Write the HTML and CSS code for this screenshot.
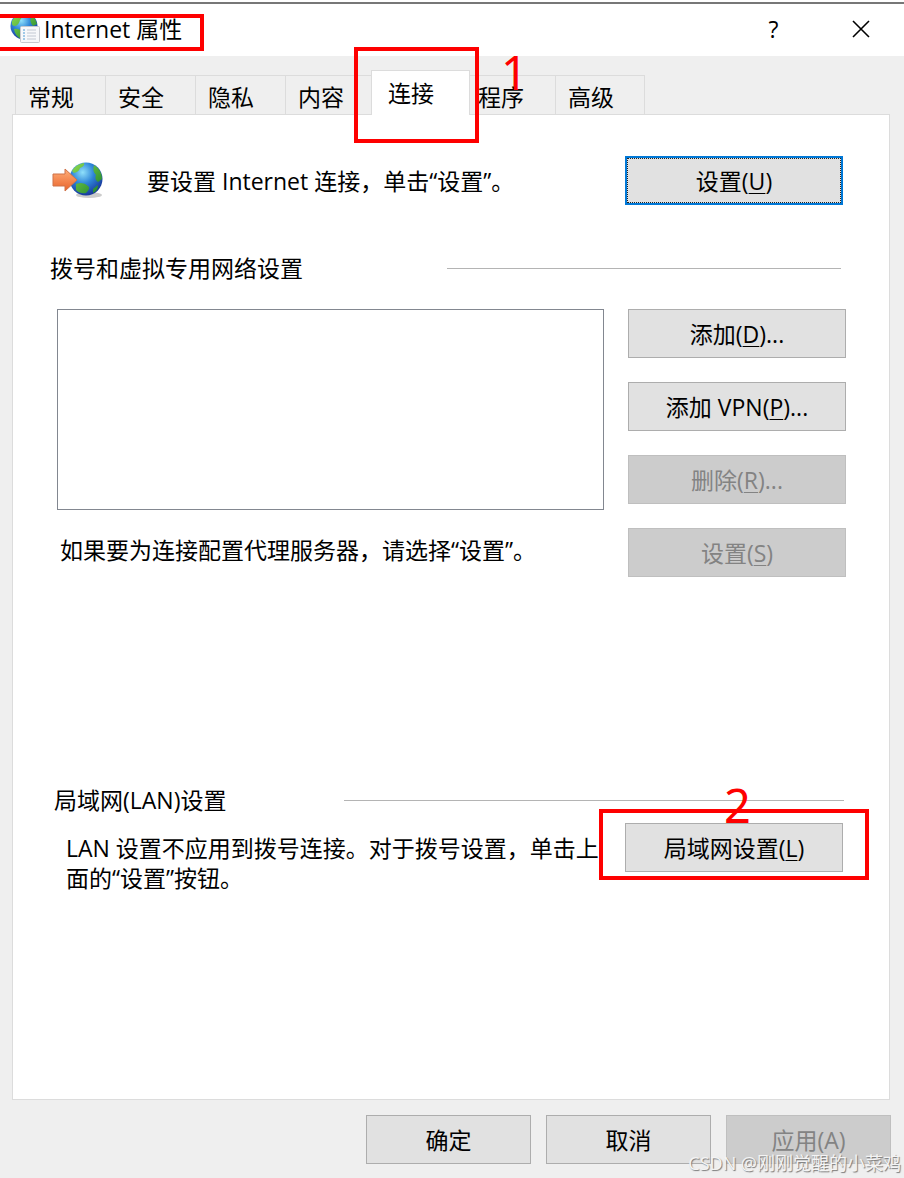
FILE: index.html
```html
<!DOCTYPE html>
<html lang="zh-CN">
<head>
    <meta charset="UTF-8">
    <meta name="viewport" content="width=device-width, initial-scale=1.0">
    <title>Internet 属性</title>
    <link rel="stylesheet" href="styles.css">
</head>
<body>

    <header class="titlebar">
        <svg class="title-icon" viewBox="0 0 30 30" aria-hidden="true">
            <defs>
                <radialGradient id="globe" cx="0.4" cy="0.3" r="0.75">
                    <stop offset="0" stop-color="#8fe0fa"/>
                    <stop offset="0.45" stop-color="#2f86d8"/>
                    <stop offset="1" stop-color="#152f94"/>
                </radialGradient>
                <linearGradient id="land" x1="0" y1="0" x2="1" y2="1">
                    <stop offset="0" stop-color="#8fdc4f"/>
                    <stop offset="1" stop-color="#17802c"/>
                </linearGradient>
            </defs>
            <circle cx="14" cy="12" r="13.500" fill="url(#globe)"/>
            <path d="M2 7Q6 1 11 0Q13 3 10 6Q9 11 5 12Q1 12 2 7ZM18 0Q25 2 27 10L23 12Q19 7 21 4ZM4 15Q10 14 12 19L11 25Q5 22 4 15Z" fill="url(#land)"/>
            <rect x="10.500" y="12.500" width="19" height="16" rx="1" fill="#f7f8fa" stroke="#c6c9cf"/>
            <path d="M13 16h2M13 19h2M13 22h2M13 25h2" stroke="#4a9bd4"/>
            <path d="M17 16h9M17 19h9M17 22h9M17 25h9" stroke="#c2c8d2"/>
        </svg>
        <h1 class="title">Internet 属性</h1>
        <button class="caption-btn" type="button" aria-label="帮助">?</button>
        <button class="caption-btn" type="button" aria-label="关闭">
            <svg width="18" height="18" viewBox="0 0 18 18"><path d="M1 1L17 17M17 1L1 17" stroke="#000" stroke-width="1.600"/></svg>
        </button>
        <div class="mark mark-title"></div>
    </header>

    <nav class="tabs" role="tablist">
        <button class="tab" type="button" role="tab">常规</button>
        <button class="tab" type="button" role="tab">安全</button>
        <button class="tab" type="button" role="tab">隐私</button>
        <button class="tab" type="button" role="tab">内容</button>
        <div class="tab-current">
            <button class="tab active" type="button" role="tab" aria-selected="true">连接</button>
            <div class="mark mark-tab"></div>
            <span class="step step-1">1</span>
        </div>
        <button class="tab" type="button" role="tab">程序</button>
        <button class="tab" type="button" role="tab">高级</button>
    </nav>

    <main class="panel">
        <section class="setup">
            <svg class="setup-icon" viewBox="0 0 52 38" aria-hidden="true">
                <defs>
                    <linearGradient id="arrow" x1="0" y1="0" x2="0" y2="1">
                        <stop offset="0" stop-color="#ffae78"/>
                        <stop offset="1" stop-color="#e9632a"/>
                    </linearGradient>
                </defs>
                <ellipse cx="37" cy="33" rx="13" ry="3" fill="#cccccc"/>
                <circle cx="34" cy="17" r="16.500" fill="url(#globe)"/>
                <path d="M20 9Q24 2 32 1Q33 4 28 6Q27 10 22 11ZM42 3Q50 8 50 17L46 20Q42 17 44 13Q40 9 42 3ZM24 22Q31 19 36 24Q39 26 34 31Q28 32 24 28ZM41 27L46 23Q46 29 41 31Z" fill="url(#land)"/>
                <path d="M1 12H13V7L25 18L13 29V24H1Z" fill="url(#arrow)" stroke="#cf7248"/>
            </svg>
            <p class="setup-text">要设置 Internet 连接，单击“设置”。</p>
            <button class="btn focused" type="button">设置(<u>U</u>)</button>
        </section>

        <section class="dialup">
            <div class="group-head">
                <h2 class="group-title">拨号和虚拟专用网络设置</h2>
                <span class="rule"></span>
            </div>
            <div class="dialup-body">
                <div class="dialup-left">
                    <select class="list" size="4" aria-label="拨号和虚拟专用网络设置"></select>
                    <p class="hint">如果要为连接配置代理服务器，请选择“设置”。</p>
                </div>
                <div class="dialup-buttons">
                    <button class="btn" type="button">添加(<u>D</u>)...</button>
                    <button class="btn" type="button">添加 VPN(<u>P</u>)...</button>
                    <button class="btn" type="button" disabled>删除(<u>R</u>)...</button>
                    <button class="btn" type="button" disabled>设置(<u>S</u>)</button>
                </div>
            </div>
        </section>

        <section class="lan">
            <div class="group-head">
                <h2 class="group-title lan-title">局域网(LAN)设置</h2>
                <span class="rule"></span>
            </div>
            <div class="lan-body">
                <p class="lan-text">LAN 设置不应用到拨号连接。对于拨号设置，单击上面的“设置”按钮。</p>
                <div class="lan-action">
                    <button class="btn" type="button">局域网设置(<u>L</u>)</button>
                    <div class="mark mark-lan"></div>
                    <span class="step step-2">2</span>
                </div>
            </div>
        </section>
    </main>

    <footer class="footer">
        <button class="btn" type="button">确定</button>
        <button class="btn" type="button">取消</button>
        <button class="btn" type="button" disabled>应用(A)</button>
    </footer>

    <div class="watermark">CSDN @刚刚觉醒的小菜鸡</div>

</body>
</html>
```
FILE: styles.css
```css
* {
    box-sizing: border-box;
}
body {
    position: relative;
    display: flex;
    flex-direction: column;
    min-height: 100vh;
    margin: 0;
    background: #efefef;
    color: #000;
    font-family: "Open Sans", "Noto Sans CJK SC", sans-serif;
    font-size: 23px;
    line-height: 30px;
}
h1, h2, p {
    margin: 0;
    font-size: 23px;
    font-weight: normal;
}
button {
    font: inherit;
    color: inherit;
    padding: 0;
}

/* Title bar */
.titlebar {
    position: relative;
    display: flex;
    align-items: center;
    height: 56px;
    padding: 2px 0 0 10px;
    background: linear-gradient(#fff 2px, #777 2px, #777 4px, #fff 4px);
}
.title-icon {
    width: 30px;
    height: 30px;
}
.title {
    flex: 1;
    padding-left: 4px;
}
.caption-btn {
    display: flex;
    align-items: center;
    justify-content: center;
    width: 87px;
    height: 50px;
    border: none;
    background: none;
}

/* Tabs */
.tabs {
    display: flex;
    align-items: flex-end;
    height: 58px;
    padding-left: 15px;
}
.tab {
    width: 90px;
    height: 40px;
    padding-left: 12px;
    padding-top: 3px;
    border: 1px solid #dcdcdc;
    border-right: none;
    background: #efefef;
    text-align: left;
    margin-bottom: -1px;
}
.tab:last-child {
    border-right: 1px solid #dcdcdc;
}
.tab-current {
    position: relative;
    z-index: 1;
    margin: 0 -5px -1px -4px;
}
.tab.active {
    display: block;
    width: 99px;
    height: 45px;
    margin: 0;
    padding: 0 0 0 16px;
    border-right: 1px solid #dcdcdc;
    border-bottom: none;
    background: #fff;
}

/* Page */
.panel {
    flex: 1;
    margin: 0 14px 0 12px;
    padding: 41px 43px 0 37px;
    border: 1px solid #dcdcdc;
    background: #fff;
}
.btn {
    width: 218px;
    height: 49px;
    border: 1px solid #adadad;
    background: #e1e1e1;
}
.btn:disabled {
    border-color: #bfbfbf;
    background: #cccccc;
    color: #838383;
}
.btn.focused {
    border: 2px solid #0078d7;
    outline: 1px dotted #222;
    outline-offset: -3px;
}
u {
    text-decoration-thickness: 1px;
    text-underline-offset: 3px;
}
.setup {
    display: flex;
    align-items: center;
    padding-right: 3px;
}
.setup-icon {
    width: 52px;
    height: 38px;
    margin-left: 2px;
}
.setup-text {
    flex: 1;
    padding-left: 43px;
}
.group-head {
    display: flex;
    align-items: center;
}
.group-title {
    width: 397px;
}
.rule {
    flex: 1;
    height: 1px;
    background: #b4b4b4;
}
.dialup {
    margin-top: 48px;
}
.dialup .group-head {
    padding-right: 5px;
}
.dialup-body {
    display: flex;
    gap: 24px;
    margin-top: 26px;
    padding-left: 7px;
}
.dialup-left {
    flex: 1;
}
.list {
    display: block;
    width: 100%;
    height: 201px;
    border: 1px solid #828790;
    border-radius: 0;
    background: #fff;
}
.hint {
    margin-top: 25px;
    padding-left: 3px;
}
.dialup-buttons {
    display: flex;
    flex-direction: column;
    gap: 24px;
}

/* LAN */
.lan {
    margin-top: 208px;
    padding-left: 4px;
}
.lan-title {
    width: 290px;
}
.lan .group-head {
    padding-right: 2px;
}
.lan-body {
    display: flex;
    justify-content: space-between;
    margin-top: 8px;
    padding: 0 3px 0 12px;
}
.lan-text {
    width: 540px;
    padding-top: 10px;
}
.lan-action {
    position: relative;
}

.footer {
    display: flex;
    justify-content: flex-end;
    gap: 15px;
    padding: 15px 13px 14px;
}
.footer .btn {
    width: 165px;
}

/* Red callouts */
.mark {
    position: absolute;
    border: 4px solid #fe0000;
    pointer-events: none;
}
.mark-title {
    top: 14px;
    left: -4px;
    width: 208px;
    height: 37px;
}
.mark-tab {
    top: -23px;
    left: -17px;
    width: 125px;
    height: 96px;
}
.mark-lan {
    top: -14px;
    left: -26px;
    width: 270px;
    height: 71px;
}
.step {
    position: absolute;
    color: #fe0000;
    font-family: "Noto Sans", sans-serif;
    font-size: 47px;
    line-height: 48px;
}
.step-1 {
    top: -22px;
    left: 130px;
}
.step-2 {
    top: -42px;
    left: 99px;
}
.watermark {
    position: absolute;
    right: 3px;
    bottom: 0;
    color: #f4f4f4;
    font-size: 18px;
    text-shadow: 1px 1px 1px #777;
}
```
